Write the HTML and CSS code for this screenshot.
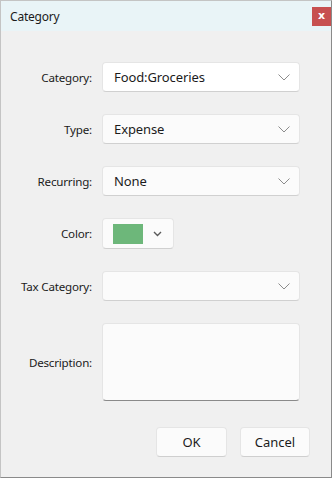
FILE: index.html
```html
<!DOCTYPE html>
<html>
<head>
<meta charset="utf-8">
<link rel="stylesheet" href="styles.css">
</head>
<body>
<div class="window">
  <div class="titlebar">
    <span class="title">Category</span>
    <span class="close">x</span>
  </div>
  <div class="content">
    <div class="form">
      <label class="label">Category:</label>
      <div class="field combo focus"><span class="value">Food:Groceries</span><svg class="chev" viewBox="0 0 12 7"><path d="M0.5 0.5 L6 6 L11.5 0.5" /></svg></div>

      <label class="label">Type:</label>
      <div class="field combo"><span class="value">Expense</span><svg class="chev" viewBox="0 0 12 7"><path d="M0.5 0.5 L6 6 L11.5 0.5" /></svg></div>

      <label class="label">Recurring:</label>
      <div class="field combo"><span class="value">None</span><svg class="chev" viewBox="0 0 12 7"><path d="M0.5 0.5 L6 6 L11.5 0.5" /></svg></div>

      <label class="label">Color:</label>
      <div class="colorcell"><div class="field colorpick"><span class="swatch"></span><svg class="chev small" viewBox="0 0 9 6"><path d="M1 1 L4.5 4.5 L8 1" /></svg></div></div>

      <label class="label">Tax Category:</label>
      <div class="field combo"><span class="value"></span><svg class="chev" viewBox="0 0 12 7"><path d="M0.5 0.5 L6 6 L11.5 0.5" /></svg></div>

      <label class="label">Description:</label>
      <div class="field textarea"></div>
    </div>
    <div class="buttons">
      <button class="btn ok">OK</button>
      <button class="btn">Cancel</button>
    </div>
  </div>
</div>
</body>
</html>
```
FILE: styles.css
```css
html, body {
  margin: 0;
  padding: 0;
  background: #ffffff;
}
body {
  font-family: "Noto Sans", "Open Sans", sans-serif;
  color: #1b1b1b;
}
.window {
  width: 332px;
  height: 478px;
  box-sizing: border-box;
  border: 1px solid #c4c4c4;
  border-right-color: #8a8a8a;
  border-bottom-color: #8a8a8a;
  background: #f0f0f0;
  display: flex;
  flex-direction: column;
}
.titlebar {
  height: 30px;
  background: #e9f4f7;
  display: flex;
  align-items: center;
  justify-content: space-between;
  padding-left: 9px;
  flex: none;
}
.title {
  font-size: 12px;
  letter-spacing: -0.2px;
}
.close {
  width: 19px;
  height: 19px;
  background: #c75050;
  color: #fff;
  font-weight: bold;
  font-size: 11px;
  line-height: 17px;
  text-align: center;
  font-family: "DejaVu Sans", sans-serif;
}
.content {
  flex: 1;
  display: flex;
  flex-direction: column;
  padding-top: 31px;
}
.form {
  display: grid;
  grid-template-columns: 91px 198px;
  column-gap: 10px;
  row-gap: 22px;
  align-items: center;
}
.label {
  text-align: right;
  font-size: 11.6px;
  letter-spacing: -0.2px;
  color: #1b1b1b;
}
.field {
  box-sizing: border-box;
  background: #fbfbfb;
  border: 1px solid #e5e5e5;
  border-bottom-color: #d0d0d0;
  border-radius: 4px;
}
.combo {
  height: 30px;
  display: flex;
  align-items: center;
  justify-content: space-between;
  padding: 0 9px 0 11px;
}
.combo.focus {
  background: #ffffff;
}
.value {
  font-size: 13px;
  letter-spacing: -0.1px;
  color: #1b1b1b;
}
.chev {
  width: 12px;
  height: 7px;
  fill: none;
  stroke: #8c8c8c;
  stroke-width: 1;
}
.chev.small {
  width: 9px;
  height: 6px;
  stroke: #5a5a5a;
  stroke-width: 1.4;
}
.colorcell {
  display: flex;
}
.colorpick {
  width: 72px;
  height: 31px;
  display: flex;
  align-items: center;
  padding-left: 10px;
  gap: 10px;
}
.swatch {
  width: 30px;
  height: 20px;
  background: #6db77a;
}
.textarea {
  height: 78px;
  border-bottom-color: #8a8a8a;
}
.buttons {
  display: flex;
  justify-content: flex-end;
  gap: 13px;
  padding-right: 21px;
  margin-top: 26px;
}
.btn {
  box-sizing: border-box;
  height: 30px;
  background: #fbfbfb;
  border: 1px solid #e5e5e5;
  border-bottom-color: #cfcfcf;
  border-radius: 4px;
  font-family: "Noto Sans", "Open Sans", sans-serif;
  font-size: 13px;
  color: #1b1b1b;
  padding: 0;
}
.btn.ok { width: 71px; }
.btn:not(.ok) { width: 70px; }
```
